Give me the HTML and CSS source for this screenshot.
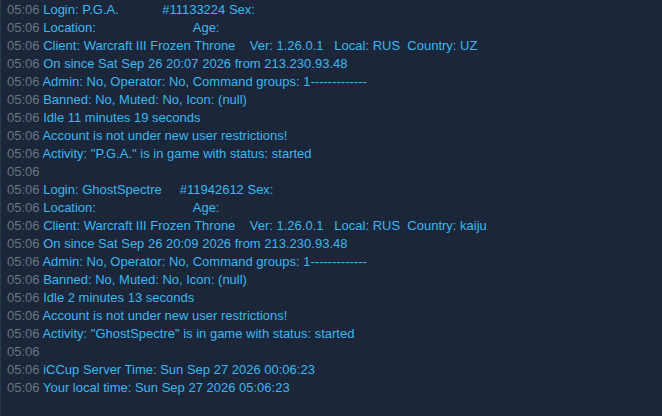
FILE: index.html
```html
<!DOCTYPE html>
<html>
<head>
<meta charset="utf-8">
<link rel="stylesheet" href="styles.css">
</head>
<body>
<div class="log">
<div class="line"><span class="ts">05:06</span> <span class="msg">Login: P.G.A.            #11133224 Sex:</span></div>
<div class="line"><span class="ts">05:06</span> <span class="msg">Location:                           Age:</span></div>
<div class="line"><span class="ts">05:06</span> <span class="msg">Client: Warcraft III Frozen Throne    Ver: 1.26.0.1   Local: RUS  Country: UZ</span></div>
<div class="line"><span class="ts">05:06</span> <span class="msg">On since Sat Sep 26 20:07 2026 from 213.230.93.48</span></div>
<div class="line"><span class="ts">05:06</span> <span class="msg">Admin: No, Operator: No, Command groups: 1-------------</span></div>
<div class="line"><span class="ts">05:06</span> <span class="msg">Banned: No, Muted: No, Icon: (null)</span></div>
<div class="line"><span class="ts">05:06</span> <span class="msg">Idle 11 minutes 19 seconds</span></div>
<div class="line"><span class="ts">05:06</span> <span class="msg">Account is not under new user restrictions!</span></div>
<div class="line"><span class="ts">05:06</span> <span class="msg">Activity: "P.G.A." is in game with status: started</span></div>
<div class="line"><span class="ts">05:06</span> <span class="msg"></span></div>
<div class="line"><span class="ts">05:06</span> <span class="msg">Login: GhostSpectre     #11942612 Sex:</span></div>
<div class="line"><span class="ts">05:06</span> <span class="msg">Location:                           Age:</span></div>
<div class="line"><span class="ts">05:06</span> <span class="msg">Client: Warcraft III Frozen Throne    Ver: 1.26.0.1   Local: RUS  Country: kaiju</span></div>
<div class="line"><span class="ts">05:06</span> <span class="msg">On since Sat Sep 26 20:09 2026 from 213.230.93.48</span></div>
<div class="line"><span class="ts">05:06</span> <span class="msg">Admin: No, Operator: No, Command groups: 1-------------</span></div>
<div class="line"><span class="ts">05:06</span> <span class="msg">Banned: No, Muted: No, Icon: (null)</span></div>
<div class="line"><span class="ts">05:06</span> <span class="msg">Idle 2 minutes 13 seconds</span></div>
<div class="line"><span class="ts">05:06</span> <span class="msg">Account is not under new user restrictions!</span></div>
<div class="line"><span class="ts">05:06</span> <span class="msg">Activity: "GhostSpectre" is in game with status: started</span></div>
<div class="line"><span class="ts">05:06</span> <span class="msg"></span></div>
<div class="line"><span class="ts">05:06</span> <span class="msg">iCCup Server Time: Sun Sep 27 2026 00:06:23</span></div>
<div class="line"><span class="ts">05:06</span> <span class="msg">Your local time: Sun Sep 27 2026 05:06:23</span></div>
</div>
</body>
</html>
```
FILE: styles.css
```css
html, body {
  margin: 0;
  padding: 0;
  background: #1b2739;
  height: 100%;
}
.log {
  height: 416px;
  box-sizing: border-box;
  border-left: 1px solid #2c3a4e;
  padding: 1px 0 0 6px;
  font-family: "Liberation Sans", Arial, sans-serif;
  font-size: 13px;
  line-height: 18px;
}
.line {
  height: 18px;
  white-space: nowrap;
}
.ts {
  color: #6c7581;
}
.msg {
  color: #3cb6f0;
  white-space: pre;
}
```
